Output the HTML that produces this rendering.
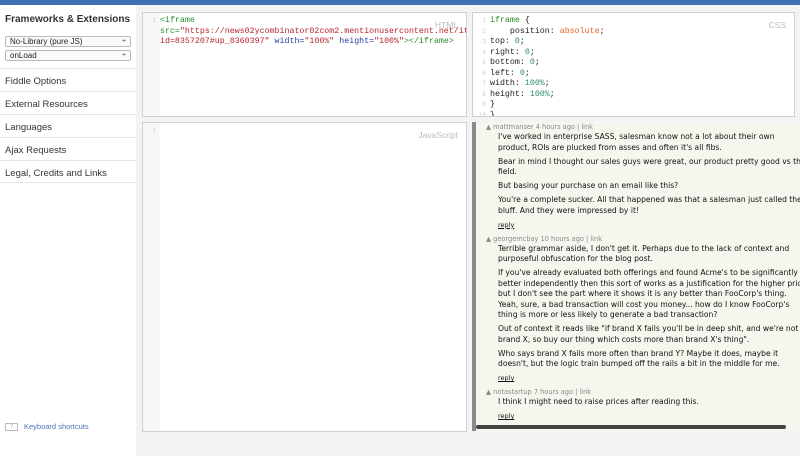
<!DOCTYPE html>
<html><head><style>
*{margin:0;padding:0;box-sizing:border-box}
body{width:800px;height:456px;overflow:hidden;background:#f3f3f3;font-family:"Liberation Sans",sans-serif;position:relative}
.top{position:absolute;left:0;top:0;width:800px;height:5px;background:#3f6eb3}
.side{position:absolute;left:0;top:5px;width:136px;height:451px;background:#fff}
.side h3{font-size:10px;font-weight:bold;color:#333;position:absolute;left:5px;top:9px}
.sel{position:absolute;left:5px;width:126px;height:11px;border:1px solid #bbb;border-radius:2px;font-size:8px;line-height:9px;padding-left:4px;color:#222;background:#fafafa}
.sel:after{content:"÷";position:absolute;right:4px;top:0;font-size:7px}
.item{position:absolute;left:0;width:136px;height:23px;border-top:1px solid #e6e6e6;font-size:9.5px;color:#333;padding:7px 0 0 5px}
.ks{position:absolute;left:5px;top:417px;font-size:7.5px;color:#4a73b8}
.ks span{display:inline-block;width:13px;height:8px;border:1px solid #bbb;color:#aaa;text-align:center;line-height:6px;font-size:6px;margin-right:6px;vertical-align:middle}
.panel{position:absolute;background:#fff;border:1px solid #cfcfcf;overflow:hidden}
.gut{position:absolute;left:0;top:0;bottom:0;width:17px;background:#f7f7f7}
.lab{position:absolute;right:8px;top:7px;font-size:8.5px;color:#bbb}
.code{position:absolute;left:0;top:3px;font-family:"Liberation Mono",monospace;font-size:8.3px;line-height:10.5px;color:#222;white-space:pre}
.ln{display:inline-block;width:17px;text-align:right;padding-right:4px;color:#ccc;font-size:6px}
.g{color:#2a8a2a}.r{color:#b4252b}.b{color:#2b3fa0}.o{color:#e8621e}.n{color:#2a8a6a}
.res{position:absolute;left:472px;top:122px;width:328px;height:309px;background:#f6f6ef;border-left:4px solid #8a8a8a;overflow:hidden;font-family:"DejaVu Sans",sans-serif}
.res .hd{font-size:6.6px;color:#888;margin-left:10px;height:10px;line-height:10px}
.res p{font-size:7.6px;line-height:10.5px;color:#111;margin-left:22px;margin-bottom:3.5px;white-space:nowrap}
.res .rp{font-size:6.5px;color:#111;text-decoration:underline;margin-left:22px;margin-bottom:2px;line-height:10px}
</style></head><body>
<div class="top"></div>
<div class="side">
<h3>Frameworks &amp; Extensions</h3>
<div class="sel" style="top:31px">No-Library (pure JS)</div>
<div class="sel" style="top:45px">onLoad</div>
<div class="item" style="top:63px">Fiddle Options</div>
<div class="item" style="top:86px">External Resources</div>
<div class="item" style="top:109px">Languages</div>
<div class="item" style="top:132px">Ajax Requests</div>
<div class="item" style="top:155px;border-bottom:1px solid #e6e6e6">Legal, Credits and Links</div>
<div class="ks"><span>?</span>Keyboard shortcuts</div>
</div>
<div class="panel" style="left:142px;top:12px;width:325px;height:105px"><div class="gut"></div><div class="lab">HTML</div>
<div class="code"><span class="ln">1</span><span class="g">&lt;iframe</span>
<span class="ln"></span><span class="g">src=</span><span class="r">"https://news02ycombinator02com2.mentionusercontent.net/item</span>
<span class="ln"></span><span class="r">id=8357207#up_8360397"</span> <span class="b">width=</span><span class="r">"100%"</span> <span class="b">height=</span><span class="r">"100%"</span><span class="g">&gt;&lt;/iframe&gt;</span></div></div>
<div class="panel" style="left:472px;top:12px;width:323px;height:105px"><div class="gut" style="background:#fff"></div><div class="lab">CSS</div>
<div class="code"><span class="ln">1</span><span class="g">iframe</span> {
<span class="ln">2</span>    position: <span class="o">absolute</span>;
<span class="ln">3</span>top: <span class="n">0</span>;
<span class="ln">4</span>right: <span class="n">0</span>;
<span class="ln">5</span>bottom: <span class="n">0</span>;
<span class="ln">6</span>left: <span class="n">0</span>;
<span class="ln">7</span>width: <span class="n">100%</span>;
<span class="ln">8</span>height: <span class="n">100%</span>;
<span class="ln">9</span>}
<span class="ln">10</span>}</div></div>
<div class="panel" style="left:142px;top:122px;width:325px;height:310px"><div class="gut"></div><div class="lab">JavaScript</div>
<div class="code"><span class="ln">1</span></div></div>
<div class="res">
<div class="hd">▲ mattmanser 4 hours ago | link</div>
<p>I've worked in enterprise SASS, salesman know not a lot about their own<br>product, ROIs are plucked from asses and often it's all fibs.</p>
<p>Bear in mind I thought our sales guys were great, our product pretty good vs the<br>field.</p>
<p>But basing your purchase on an email like this?</p>
<p>You're a complete sucker. All that happened was that a salesman just called their<br>bluff. And they were impressed by it!</p>
<div class="rp">reply</div>
<div class="hd" style="margin-top:4px">▲ georgemcbay 10 hours ago | link</div>
<p>Terrible grammar aside, I don't get it. Perhaps due to the lack of context and<br>purposeful obfuscation for the blog post.</p>
<p>If you've already evaluated both offerings and found Acme's to be significantly<br>better independently then this sort of works as a justification for the higher price<br>but I don't see the part where it shows it is any better than FooCorp's thing.<br>Yeah, sure, a bad transaction will cost you money... how do I know FooCorp's<br>thing is more or less likely to generate a bad transaction?</p>
<p>Out of context it reads like "if brand X fails you'll be in deep shit, and we're not<br>brand X, so buy our thing which costs more than brand X's thing".</p>
<p>Who says brand X fails more often than brand Y? Maybe it does, maybe it<br>doesn't, but the logic train bumped off the rails a bit in the middle for me.</p>
<div class="rp">reply</div>
<div class="hd" style="margin-top:4px">▲ notastartup 7 hours ago | link</div>
<p>I think I might need to raise prices after reading this.</p>
<div class="rp">reply</div>
<div style="position:absolute;left:0;top:303px;width:310px;height:4px;background:#444;border-radius:2px"></div>
</div>
</body></html>
